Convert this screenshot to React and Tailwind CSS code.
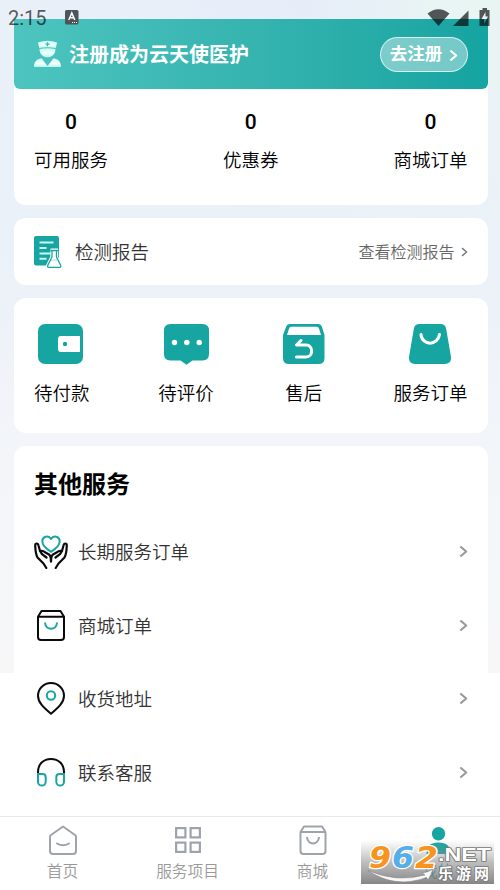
const TEAL = "#17a5a2";

function Chevron({ className, width = 2 }) {
  return (
    <svg viewBox="0 0 10 14" fill="none" className={className}>
      <path d="M1.500 1.500 8 7l-6.500 5.500" stroke="currentColor" strokeWidth={width} strokeLinejoin="round" />
    </svg>
  );
}

function NurseIcon() {
  return (
    <svg viewBox="0 0 27 28" className="h-[28px] w-[27px]">
      <defs>
        <linearGradient id="nurse" x1="0" y1="0" x2="0" y2="1">
          <stop offset="0" stopColor="#c5fbf4" />
          <stop offset="0.6" stopColor="#f2fffd" />
          <stop offset="1" stopColor="#b5f5ee" />
        </linearGradient>
      </defs>
      <path d="M4 2.500Q13.500-.8 23 2.500L21.800 8Q13.500 6.500 5.200 8Z" fill="url(#nurse)" />
      <path d="M13.500 2.200v4M11.500 4.200h4" stroke="#3bb8b4" strokeWidth="1.200" />
      <path d="M5.500 9q8-1.500 16 0c0 5-3.500 8.300-8 8.300S5.500 14 5.500 9Z" fill="url(#nurse)" />
      <path d="M0 27c0-5 2.500-8 7.500-8.800L13.500 26l6-7.800C24.500 19 27 22 27 27Z" fill="url(#nurse)" />
    </svg>
  );
}

function ReportIcon() {
  return (
    <svg viewBox="0 0 28 33" className="mt-px h-[33px] w-[28px]" fill="none">
      <rect width="25" height="29.500" rx="2" fill={TEAL} />
      <path d="M5.500 6.500h14M5.500 12h7M5.500 17.500h11M5.500 22.700h7" stroke="#c9fbf6" strokeWidth="2" />
      <path
        d="M16.500 14h7.500M17.800 14.500v6.500L13.500 29.500q-.8 2 1 2h11q1.800 0 1-2L22.700 21v-6.500"
        fill="#fff"
        stroke="#fff"
        strokeWidth="3"
      />
      <path
        d="M16.500 14.500h7.500M18 14.500v6.500L13.800 29.300q-.8 2 1 2h10.800q1.800 0 1-2L22.500 21v-6.500"
        stroke={TEAL}
        strokeWidth="1.300"
      />
      <path d="M17 24.500q3.200-1.500 6.500 0" stroke="#a5dddc" strokeWidth="1" />
    </svg>
  );
}

function WalletIcon() {
  return (
    <svg viewBox="0 0 45 40" className="h-10 w-[45px] -translate-x-px">
      <rect width="45" height="40" rx="7" fill={TEAL} />
      <path d="M42 12H23q-3 0-3 3v10q0 3 3 3h19Z" fill="#fff" />
      <circle cx="27" cy="20" r="2.200" fill={TEAL} />
    </svg>
  );
}

function CommentIcon() {
  return (
    <svg viewBox="0 0 45 41" className="h-[41px] w-[45px]">
      <path d="M6.500 0h32Q45 0 45 6.500V30q0 6.500-6.500 6.500H28.500L22.500 40.800l-6-4.300h-10Q0 36.500 0 30V6.500Q0 0 6.500 0Z" fill={TEAL} />
      <circle cx="10.500" cy="18.500" r="2.700" fill="#fff" />
      <circle cx="22.800" cy="18.500" r="2.700" fill="#fff" />
      <circle cx="35.200" cy="18.500" r="2.700" fill="#fff" />
    </svg>
  );
}

function RefundIcon() {
  return (
    <svg viewBox="0 0 42 40" className="h-10 w-[42px]" fill="none">
      <path d="M7 0h28q3 0 4 3l2.500 8V34q0 6-6 6H6q-6 0-6-6V11L3 3q1-3 4-3Z" fill={TEAL} />
      <path d="M8.300 2.800h25.400q1.800 0 2.400 2L38 11H4L6 4.800q.5-2 2.300-2Z" fill="#fff" />
      <path
        d="M18 16.500 13.500 21h9.500c7.500 0 7.500 12 0 12H13.500"
        stroke="#fff"
        strokeWidth="3"
        strokeLinecap="round"
        strokeLinejoin="round"
      />
    </svg>
  );
}

function BagIcon() {
  return (
    <svg viewBox="0 0 42 40" className="h-10 w-[42px]" fill="none">
      <path d="M10.500 0h21q5 0 5.700 5L42 33q.5 7-6 7H6q-6.500 0-6-7L4.800 5q.7-5 5.700-5Z" fill={TEAL} />
      <path d="M12 10.500c1 11.500 17 11.500 18.500 0" stroke="#fff" strokeWidth="3" strokeLinecap="round" />
    </svg>
  );
}

function HandsIcon() {
  return (
    <svg viewBox="0 0 34 34" className="h-[34px] w-[34px]" fill="none" strokeLinecap="round" strokeLinejoin="round">
      <path
        d="M17 16.800C11 13 8.300 9.500 8.300 6.300c0-4.800 6.200-6.500 8.700-2.300 2.500-4.200 8.700-2.500 8.700 2.300 0 3.200-2.700 6.700-8.700 10.500Z"
        stroke={TEAL}
        strokeWidth="2"
      />
      <g stroke="#0a0a0a" strokeWidth="2.200">
        <path d="M12.300 33 9.500 28.500 3.500 22.500Q1.500 19 1.200 10.500C1.200 7.800 4 7.800 4.500 10.500L6 16l2 3.200 4.500 3.300" />
        <path d="M6 16q3-.8 5 1.200l4 2.300q2 1.500 2 7" />
        <path d="M21.700 33l2.800-4.500 6-6q2-3.500 2.300-12c0-2.700-2.800-2.700-3.300 0L28 16l-2 3.200-4.500 3.300" />
        <path d="M28 16q-3-.8-5 1.200l-4 2.300q-2 1.500-2 7" />
      </g>
    </svg>
  );
}

function BoxIcon() {
  return (
    <svg viewBox="0 0 28 31" className="h-[31px] w-[28px]" fill="none" strokeLinejoin="round">
      <path d="M1 6.800h26V27q0 3-3 3H4q-3 0-3-3Z" stroke="#0a0a0a" strokeWidth="2" />
      <path d="M1 6.800 4.500 1h19L27 6.800" stroke="#0a0a0a" strokeWidth="2" />
      <path d="M8 12.500c.5 8.300 11.500 8.300 12 0" stroke={TEAL} strokeWidth="2" />
    </svg>
  );
}

function PinIcon() {
  return (
    <svg viewBox="0 0 28 33" className="h-[33px] w-[28px]" fill="none" strokeLinejoin="round">
      <path d="M14 31.800C6.500 25.500 1 20.500 1 13.700a13 12.700 0 0 1 26 0c0 6.800-5.500 11.800-13 18.100Z" stroke="#0a0a0a" strokeWidth="2" />
      <circle cx="14" cy="13.500" r="4.200" stroke={TEAL} strokeWidth="2" />
    </svg>
  );
}

function HeadsetIcon() {
  return (
    <svg viewBox="0 0 28 29" className="h-[29px] w-[28px]" fill="none">
      <path d="M1 17v-3C1 6 6.500 1 14 1s13 5 13 13v3" stroke="#0a0a0a" strokeWidth="2" />
      <path d="M1 16h4.500q3.200 0 3.200 3.200v4.500a3.850 3.850 0 0 1-7.700 0ZM27 16h-4.500q-3.200 0-3.200 3.200v4.500a3.850 3.850 0 0 0 7.700 0Z" stroke={TEAL} strokeWidth="2" />
    </svg>
  );
}

function HomeTabIcon() {
  return (
    <svg viewBox="0 0 28 30" className="h-[30px] w-7" fill="none" stroke="currentColor" strokeWidth="2" strokeLinejoin="round">
      <path d="M14 1.500 26 10q1 .8 1 2v14q0 3-3 3H4q-3 0-3-3V12q0-1.200 1-2Z" />
      <path d="M8 18.500q6 3.500 12 0" strokeLinecap="round" />
    </svg>
  );
}

function GridTabIcon() {
  return (
    <svg viewBox="0 0 28 30" className="h-[30px] w-7" fill="none" stroke="currentColor" strokeWidth="2.200">
      <rect x="2.100" y="3.100" width="9.300" height="9.300" />
      <rect x="16.600" y="3.100" width="9.300" height="9.300" />
      <rect x="2.100" y="17.600" width="9.300" height="9.300" />
      <rect x="16.600" y="17.600" width="9.300" height="9.300" />
    </svg>
  );
}

function MallTabIcon() {
  return (
    <svg viewBox="0 0 28 30" className="h-[30px] w-7" fill="none" stroke="currentColor" strokeWidth="2" strokeLinejoin="round">
      <path d="M1.500 7h25v19q0 3-3 3h-19q-3 0-3-3ZM1.500 7 5 1.500h18L26.500 7" />
      <path d="M8 12c.5 8.500 11.500 8.500 12 0" />
    </svg>
  );
}

function MineTabIcon() {
  return (
    <svg viewBox="0 0 28 30" className="h-[30px] w-7" fill={TEAL}>
      <circle cx="14.500" cy="8.700" r="6.700" />
      <path d="M2.500 29c0-8 4-11.500 12-11.500s12 3.500 12 11.500Z" />
    </svg>
  );
}

function StatusBar() {
  return (
    <div className="absolute inset-x-0 top-0 flex h-[34px] items-center pr-[10px] pl-[8px] text-black/65">
      <span className="pt-px font-[Roboto] text-[20px]">2:15</span>
      <svg viewBox="0 0 14 15" className="ml-[18px] h-[15px] w-[14px]">
        <rect width="13.500" height="14.500" rx="1.500" fill="#4d5558" />
        <path d="M3.800 10 6.800 3l3 7M5 7.800h3.600" stroke="#fff" strokeWidth="1.500" fill="none" />
        <path d="M7 12.500h5" stroke="#fff" strokeWidth="1" strokeDasharray="1 1" />
      </svg>
      <svg viewBox="0 0 63 18" className="-mt-px ml-auto h-[18px] w-[63px]" fill="currentColor">
        <path d="M.5 5.500q11-8.500 22 0L11.500 18Z" />
        <path d="M26 18 41.500 2.500V18Z" />
        <path
          fillRule="evenodd"
          d="M55.500 0h4.500v2h2.500v16h-10V2h3ZM58.500 4 54.500 11h2.700v4.500L61 8.500h-2.500Z"
        />
      </svg>
    </div>
  );
}

function SiteBadge() {
  return (
    <svg viewBox="0 0 139 45" className="absolute top-[23px] right-0 h-[45px] w-[139px]">
      <defs>
        <linearGradient id="shade" x1="0" y1="0" x2="0" y2="1">
          <stop offset="0" stopColor="#999" stopOpacity="0" />
          <stop offset="0.5" stopColor="#888" stopOpacity="0.55" />
          <stop offset="1" stopColor="#707070" stopOpacity="0.85" />
        </linearGradient>
      </defs>
      <rect width="133" height="44" fill="url(#shade)" />
      <g
        fontFamily="DejaVu Sans"
        fontSize="30"
        fontWeight="bold"
        fontStyle="italic"
        stroke="#fff"
        strokeWidth="2.600"
        strokeLinejoin="round"
        paintOrder="stroke"
      >
        <text x="8" y="27.500" fill="#f7941d" textLength="22" lengthAdjust="spacingAndGlyphs">9</text>
        <text x="31" y="27.500" fill="#55aee8" textLength="22" lengthAdjust="spacingAndGlyphs">6</text>
        <text x="54" y="27.500" fill="#f7941d" textLength="23" lengthAdjust="spacingAndGlyphs">2</text>
      </g>
      <path d="M7 30.500Q36 43 64 35l-3-2q7-1 11-4-2 6-5 11l-1.500-2.500Q34 49 7 30.500Z" fill="#f8f8f8" stroke="#888" strokeWidth=".6" />
      <g fill="#fff" stroke="#777" strokeWidth="1.600" strokeLinejoin="round" paintOrder="stroke" fontWeight="bold">
        <text x="77" y="21" fontFamily="Liberation Sans" fontSize="18" textLength="53" lengthAdjust="spacingAndGlyphs">.NET</text>
        <text x="77" y="39" fontSize="15" textLength="51">乐游网</text>
      </g>
    </svg>
  );
}

const stats = [
  { label: "可用服务", value: 0 },
  { label: "优惠券", value: 0 },
  { label: "商城订单", value: 0 },
];

const orders = [
  { label: "待付款", Icon: WalletIcon },
  { label: "待评价", Icon: CommentIcon },
  { label: "售后", Icon: RefundIcon },
  { label: "服务订单", Icon: BagIcon },
];

const services = [
  { label: "长期服务订单", Icon: HandsIcon },
  { label: "商城订单", Icon: BoxIcon },
  { label: "收货地址", Icon: PinIcon },
  { label: "联系客服", Icon: HeadsetIcon },
];

const tabs = [
  { label: "首页", Icon: HomeTabIcon },
  { label: "服务项目", Icon: GridTabIcon },
  { label: "商城", Icon: MallTabIcon },
  { label: "我的", Icon: MineTabIcon, active: true },
];

export default function App() {
  return (
    <div className="relative flex h-[890px] w-[500px] flex-col overflow-hidden bg-white bg-[linear-gradient(180deg,transparent_0%,#ebf1f8_38%,#f2f5f9_65%,#f7f7f8_100%),linear-gradient(100deg,#eaf0f8_0%,#e6edf9_50%,#e9f5f3_75%,#eaf4f4_100%)] bg-[length:500px_673px] bg-no-repeat font-['Roboto','Noto_Sans_CJK_SC',sans-serif] text-black">
      <main className="flex flex-1 flex-col gap-[13px] pt-[19px] pr-[12.5px] pl-[14px]">
        <section className="h-[186px] rounded-b-xl bg-white">
          <div className="flex h-[70px] items-center rounded-b-[6px] bg-linear-to-r from-[#4dc4bf] to-[#14a4a1] pr-5 pl-5 text-white">
            <NurseIcon />
            <span className="ml-2 pt-0.5 text-[20px] font-bold">注册成为云天使医护</span>
            <button className="ml-auto flex h-[35px] w-[88px] items-center justify-center gap-[7px] rounded-full border border-white/70 bg-white/40 pl-px text-[17.5px] font-bold">
              去注册
              <Chevron className="mt-0.5 h-[13px] w-[9px]" width={2.4} />
            </button>
          </div>
          <div className="flex justify-between px-5 pt-[19px]">
            {stats.map((s) => (
              <div key={s.label} className="flex flex-col items-center">
                <span className="text-[21px] leading-7 font-medium">{s.value}</span>
                <span className="mt-[11px] text-[18.5px] leading-7 font-[350]">{s.label}</span>
              </div>
            ))}
          </div>
        </section>

        <section className="flex h-[67px] items-center rounded-xl bg-white px-5">
          <ReportIcon />
          <span className="ml-[13px] pt-1 text-[18.5px] font-[350] text-[#333]">检测报告</span>
          <span className="ml-auto pt-0.5 text-[16px] font-[350] text-[#666]">查看检测报告</span>
          <Chevron className="ml-1.5 h-[10px] w-[7px] text-[#777]" />
        </section>

        <section className="flex h-[135px] justify-between rounded-xl bg-white px-5 pt-[26px]">
          {orders.map(({ label, Icon }) => (
            <div key={label} className="flex flex-col items-center">
              <div className="h-14">
                <Icon />
              </div>
              <span className="text-[18.5px] leading-7 font-[350]">{label}</span>
            </div>
          ))}
        </section>

        <section className="flex-1 rounded-t-xl bg-white pt-[21px] pr-5 pl-5">
          <h2 className="h-12 text-[24px] leading-9 font-bold">其他服务</h2>
          {services.map(({ label, Icon }) => (
            <div key={label} className="flex h-[73.5px] items-center">
              <div className="flex w-[34px] justify-center">
                <Icon />
              </div>
              <span className="ml-[10px] pt-[5px] text-[18.5px] font-[350] text-[#333]">{label}</span>
              <Chevron className="ml-auto h-[13px] w-[9px] text-[#999]" width={2.4} />
            </div>
          ))}
        </section>
      </main>

      <nav className="relative flex h-[74px] border-t border-[#e8e8e8] bg-white text-[#9ea3ab]">
        {tabs.map(({ label, Icon, active }) => (
          <div key={label} className={active ? "flex flex-1 flex-col items-center pt-2 text-[#17a5a2]" : "flex flex-1 flex-col items-center pt-2"}>
            <Icon />
            <span className={active ? "mt-[5px] text-[15.7px] leading-6 font-[350]" : "mt-[5px] text-[15.7px] leading-6 font-[350] text-[#999]"}>{label}</span>
          </div>
        ))}
        <SiteBadge />
      </nav>

      <StatusBar />
    </div>
  );
}
